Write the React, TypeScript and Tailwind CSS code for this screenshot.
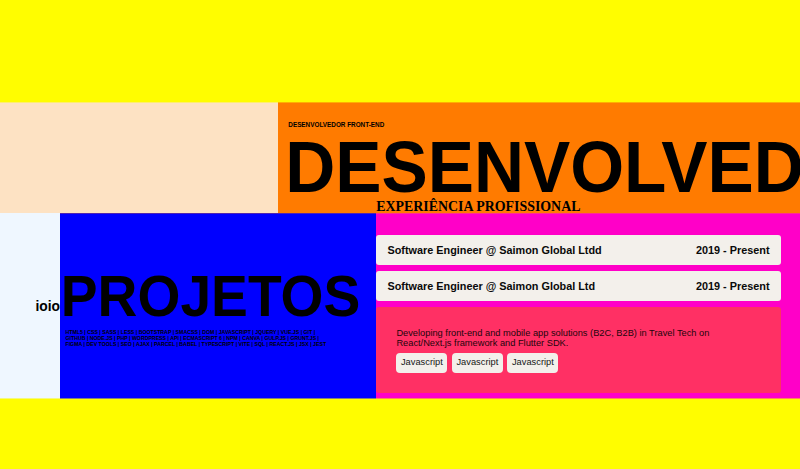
function Job({ title, period }: { title: string; period: string }) {
  return (
    <div className="flex h-[30px] w-[405px] items-center justify-between rounded-[3px] bg-[#f3f0eb] px-[11.5px] pt-px text-[10.85px] font-bold text-[#0a0a0a]">
      <span>{title}</span>
      <span>{period}</span>
    </div>
  );
}

function Tag({ label }: { label: string }) {
  return (
    <span className="flex h-[20px] w-[51px] items-center justify-center rounded-[4px] bg-[#f3f0eb] text-[9.3px] text-[#161616]">
      {label}
    </span>
  );
}

export default function App() {
  return (
    <main className="flex h-[469px] w-[800px] flex-col overflow-hidden bg-[#fffd00] pt-[102px] font-['Liberation_Sans',Arial,sans-serif] text-black">
      <section className="flex h-[111px] shrink-0">
        <div className="w-[278px] shrink-0 border-t border-[#feee70] bg-[#fde2c3]" />
        <div className="flex w-[522px] shrink-0 flex-col overflow-hidden border-t border-[#ffb000] bg-[#ff7b00] whitespace-nowrap">
          <p className="mt-[18px] ml-[10.3px] h-[8px] text-[6.37px] leading-[8px] font-bold">DESENVOLVEDOR FRONT-END</p>
          <h1 className="mt-[3px] ml-[7.2px] h-[68px] origin-[0_60px] scale-y-[1.04] text-[69.3px] leading-[72px] font-bold">
            DESENVOLVEDOR
          </h1>
          <h2 className="ml-[98.3px] h-[13px] font-['Liberation_Serif','Times_New_Roman',serif] text-[13.9px] leading-[13px] font-bold">
            EXPERIÊNCIA PROFISSIONAL
          </h2>
        </div>
      </section>
      <section className="flex h-[186px] shrink-0">
        <div className="flex w-[60px] shrink-0 items-center justify-end border-b border-[#f5f97c] bg-[#eff7ff] pt-[3px] text-[13.8px] font-bold">
          ioio
        </div>
        <div className="flex w-[316px] shrink-0 flex-col border-t border-b border-t-[#4d25b3] border-b-[#808080] bg-[#0000ff] whitespace-nowrap">
          <h2 className="mt-[53px] ml-[0.8px] h-[60px] origin-[0_49px] scale-y-[1.04] text-[55.2px] leading-[60px] font-bold">
            PROJETOS
          </h2>
          <div className="mt-[3px] ml-[5.5px] text-[5.21px] leading-[5.8px] font-bold">
            <p>HTML5 | CSS | SASS | LESS | BOOTSTRAP | SMACSS | DOM | JAVASCRIPT | JQUERY | VUE.JS | GIT |</p>
            <p>GITHUB | NODE.JS | PHP | WORDPRESS | API | ECMASCRIPT 6 | NPM | CANVA | GULP.JS | GRUNT.JS |</p>
            <p>FIGMA | DEV TOOLS | SEO | AJAX | PARCEL | BABEL | TYPESCRIPT | VITE | SQL | REACT.JS | JSX | JEST</p>
          </div>
        </div>
        <div className="flex w-[424px] shrink-0 flex-col gap-[6px] border-t border-b border-t-[#ff2d90] border-b-[#ff8064] bg-[#ff00c8] pt-[21px]">
          <Job title="Software Engineer @ Saimon Global Ltdd" period="2019 - Present" />
          <Job title="Software Engineer @ Saimon Global Ltd" period="2019 - Present" />
          <div className="h-[86px] w-[405px] rounded-[3px] bg-[#ff3064] pt-[21px] pl-[20.4px]">
            <p className="text-[9.27px] leading-[10.4px] whitespace-nowrap text-[#1c050b]">
              Developing front-end and mobile app solutions (B2C, B2B) in Travel Tech on
              <br />
              React/Next.js framework and Flutter SDK.
            </p>
            <div className="mt-[4.5px] flex gap-[4.5px]">
              <Tag label="Javascript" />
              <Tag label="Javascript" />
              <Tag label="Javascript" />
            </div>
          </div>
        </div>
      </section>
    </main>
  );
}
